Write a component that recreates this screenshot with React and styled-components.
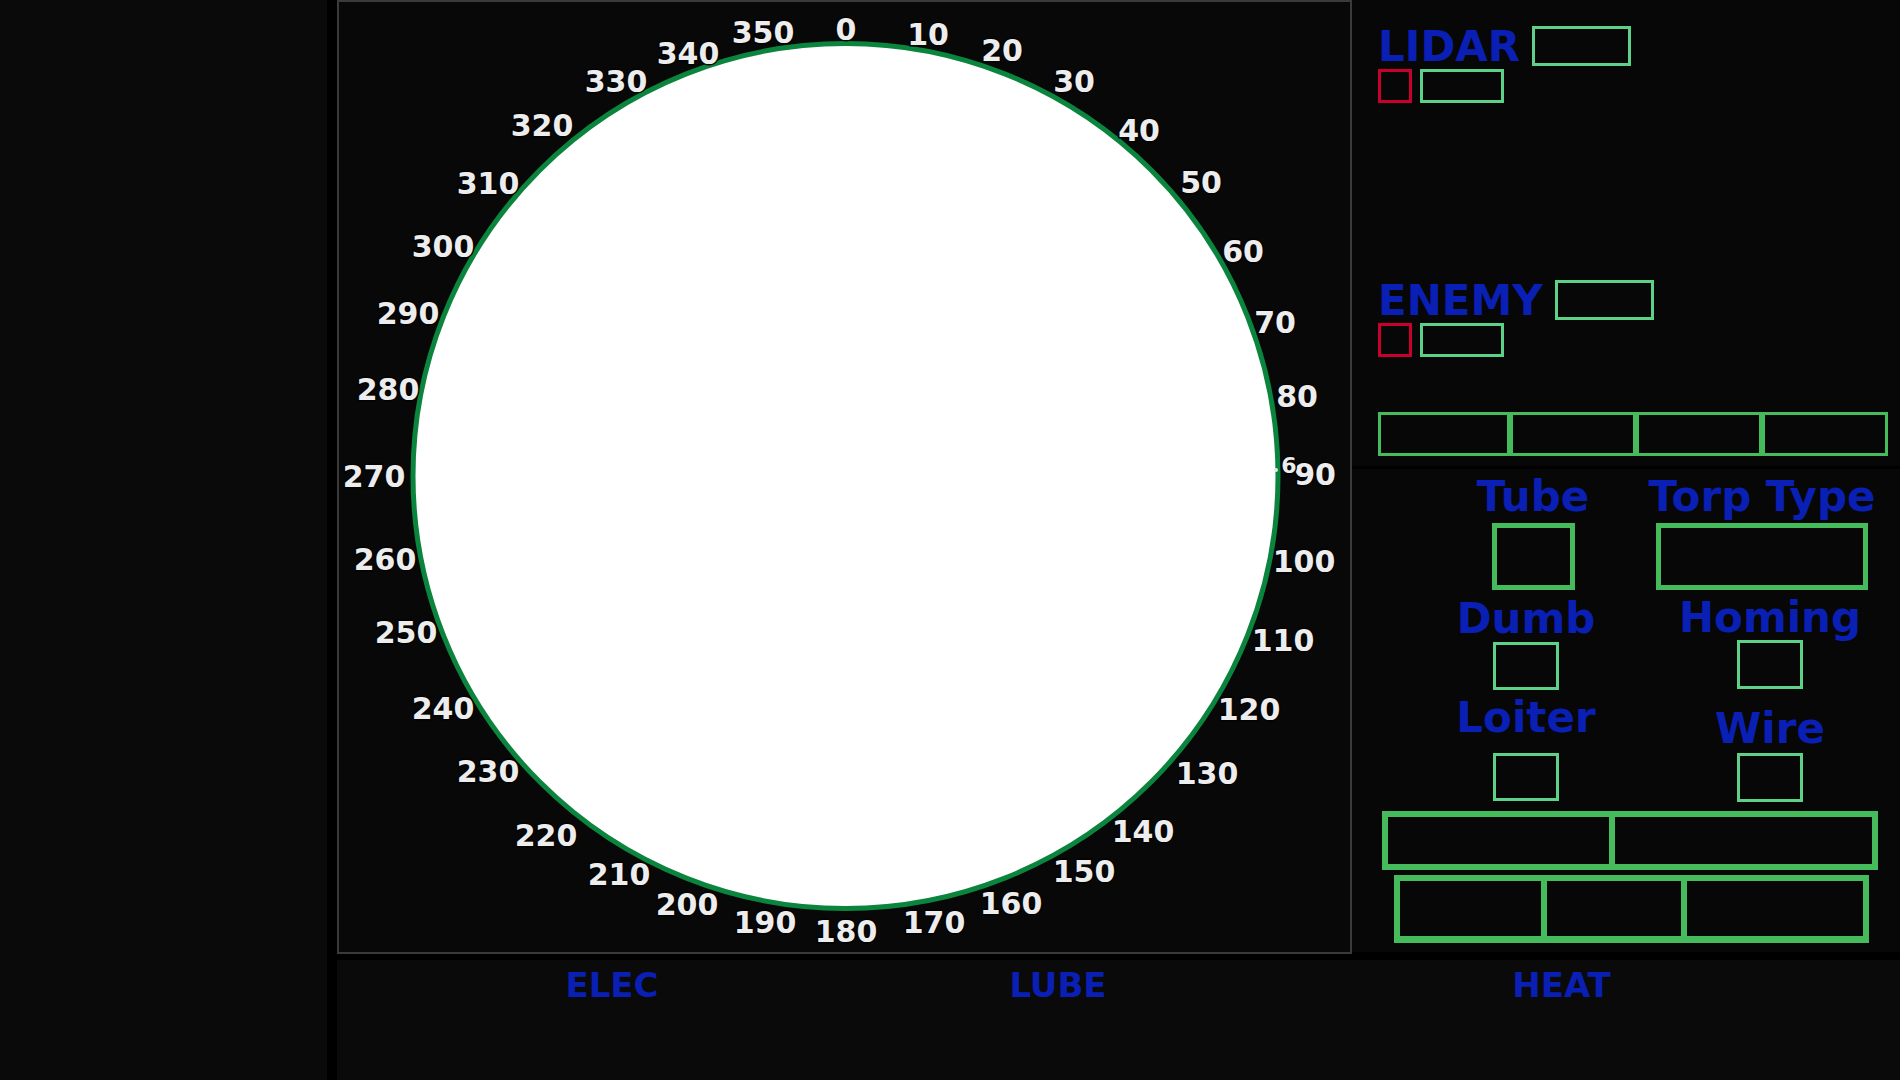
import React from "react";
import styled, { createGlobalStyle } from "styled-components";

const BLUE = "#0a1fb4";
const LIGHT_GREEN = "#5dd187";
const GREEN = "#45bb5b";
const RED = "#c8002d";

const GlobalStyle = createGlobalStyle`
    html, body {
        margin: 0;
        padding: 0;
        background: #000;
    }
    body {
        font-family: "DejaVu Sans", Verdana, sans-serif;
    }
`;

const Screen = styled.div`
    display: flex;
    gap: 10px;
    width: 1900px;
    height: 1080px;
    background: #000;
    overflow: hidden;
`;

const LeftRail = styled.div`
    width: 327px;
    flex-shrink: 0;
    background: #0a0a0a;
`;

const Main = styled.div`
    flex: 1;
    display: flex;
    flex-direction: column;
    gap: 6px;
`;

const TopRow = styled.div`
    display: flex;
    height: 954px;
`;

const CompassPanel = styled.div`
    width: 1015px;
    flex-shrink: 0;
    box-sizing: border-box;
    border: 2px solid #3a3a3a;
    background: #080808;
    svg {
        display: block;
    }
`;

const DialLabel = styled.text`
    font-family: "DejaVu Sans", Verdana, sans-serif;
    font-weight: bold;
    font-size: ${(p) => p.$size || 30}px;
    fill: #ededed;
    stroke: #030303;
    stroke-width: 3px;
    paint-order: stroke;
    text-anchor: middle;
    dominant-baseline: central;
`;

const SideColumn = styled.div`
    flex: 1;
    display: flex;
    flex-direction: column;
    gap: 3px;
    padding-bottom: 2px;
`;

const TargetPanel = styled.div`
    height: 466px;
    flex-shrink: 0;
    box-sizing: border-box;
    background: #070707;
    padding: 26px 0 0 26px;
    display: flex;
    flex-direction: column;
`;

const ContactGroup = styled.div`
    display: flex;
    flex-direction: column;
    gap: 1px;
    margin-top: ${(p) => p.$top || 0}px;
`;

const TitleRow = styled.div`
    display: flex;
    align-items: flex-start;
    gap: 12px;
`;

const Title = styled.div`
    font-size: 42px;
    line-height: 42px;
    font-weight: bold;
    color: ${BLUE};
`;

const StatusRow = styled.div`
    display: flex;
    gap: 8px;
`;

const Box = styled.div`
    box-sizing: border-box;
    width: ${(p) => p.$w}px;
    height: ${(p) => p.$h}px;
    border: ${(p) => p.$bw || 3}px solid ${(p) => p.$color || LIGHT_GREEN};
    background: transparent;
`;

const Bar = styled.div`
    box-sizing: border-box;
    display: grid;
    grid-template-columns: ${(p) => p.$cols};
    width: ${(p) => p.$w}px;
    height: ${(p) => p.$h}px;
    margin: ${(p) => p.$top}px 0 0 ${(p) => p.$left}px;
    border: ${(p) => p.$bw}px solid ${GREEN};
    border-bottom-width: ${(p) => p.$bb || p.$bw}px;
`;

const BarCell = styled.div`
    box-sizing: border-box;
    & + & {
        border-left: ${(p) => p.$div}px solid ${GREEN};
    }
`;

const TorpedoPanel = styled.div`
    flex: 1;
    background: #070707;
    padding-top: 8px;
    display: flex;
    flex-direction: column;
`;

const FieldGrid = styled.div`
    display: grid;
    grid-template-columns: 176px 234px;
    column-gap: 34px;
    row-gap: 8px;
    margin-left: 88px;
`;

const Field = styled.div`
    display: flex;
    flex-direction: column;
    align-items: center;
    padding-top: ${(p) => p.$offset || 0}px;
    padding-left: ${(p) => Math.max(p.$shift || 0, 0) * 2}px;
    padding-right: ${(p) => Math.max(-(p.$shift || 0), 0) * 2}px;
    gap: ${(p) => p.$gap}px;
`;

const FieldLabel = styled.div`
    font-size: 42px;
    line-height: 40px;
    font-weight: bold;
    color: ${BLUE};
    white-space: nowrap;
`;

const BottomPanel = styled.div`
    flex: 1;
    background: #0a0a0a;
    display: grid;
    grid-template-columns: 550px 342px 1fr;
    align-items: start;
    padding: 8px 6px 0 0;
`;

const GaugeLabel = styled.div`
    text-align: center;
    font-size: 34px;
    line-height: 34px;
    font-weight: bold;
    color: ${BLUE};
`;

// bearing, x, y (page coordinates)
const bearings = [
    [0, 846, 29], [10, 928, 34], [20, 1002, 50], [30, 1074, 81],
    [40, 1139, 130], [50, 1201, 182], [60, 1243, 251], [70, 1275, 322],
    [80, 1297, 396], [90, 1315, 474], [100, 1304, 561], [110, 1283, 640],
    [120, 1249, 709], [130, 1207, 773], [140, 1143, 831], [150, 1084, 871],
    [160, 1011, 903], [170, 934, 922], [180, 846, 931], [190, 765, 922],
    [200, 687, 904], [210, 619, 874], [220, 546, 835], [230, 488, 771],
    [240, 443, 708], [250, 406, 632], [260, 385, 559], [270, 374, 476],
    [280, 388, 389], [290, 408, 313], [300, 443, 246], [310, 488, 183],
    [320, 542, 125], [330, 616, 81], [340, 688, 53], [350, 763, 32],
];

function Compass() {
    return (
        <CompassPanel>
            <svg width="1011" height="950" viewBox="339 2 1011 950">
                <circle cx="845.5" cy="476" r="432.5" fill="#fff" stroke="#0b843e" strokeWidth="5" />
                {bearings.map(([deg, x, y]) => (
                    <DialLabel key={deg} x={x} y={y}>
                        {deg}
                    </DialLabel>
                ))}
                <circle cx="1276" cy="470" r="2" fill="#e8e8e8" />
                <DialLabel x={1289} y={465} $size={22}>
                    6
                </DialLabel>
            </svg>
        </CompassPanel>
    );
}

function Contact({ name, top }) {
    return (
        <ContactGroup $top={top}>
            <TitleRow>
                <Title>{name}</Title>
                <Box $w={99} $h={40} />
            </TitleRow>
            <StatusRow>
                <Box $w={34} $h={34} $color={RED} />
                <Box $w={84} $h={34} />
            </StatusRow>
        </ContactGroup>
    );
}

export default function App() {
    return (
        <>
            <GlobalStyle />
            <Screen>
                <LeftRail />
                <Main>
                    <TopRow>
                        <Compass />
                        <SideColumn>
                            <TargetPanel>
                                <Contact name="LIDAR" />
                                <Contact name="ENEMY" top={177} />
                                <Bar $cols="1fr 1fr 1fr 1fr" $w={510} $h={44} $bw={3} $top={55} $left={0}>
                                    <BarCell $div={3} />
                                    <BarCell $div={3} />
                                    <BarCell $div={3} />
                                    <BarCell $div={3} />
                                </Bar>
                            </TargetPanel>
                            <TorpedoPanel>
                                <FieldGrid>
                                    <Field $gap={6} $shift={5}>
                                        <FieldLabel>Tube</FieldLabel>
                                        <Box $w={83} $h={67} $bw={5} $color={GREEN} />
                                    </Field>
                                    <Field $gap={6} $shift={-5}>
                                        <FieldLabel>Torp Type</FieldLabel>
                                        <Box $w={212} $h={67} $bw={5} $color={GREEN} />
                                    </Field>
                                    <Field $gap={3} $offset={1} $shift={-2}>
                                        <FieldLabel>Dumb</FieldLabel>
                                        <Box $w={66} $h={48} />
                                    </Field>
                                    <Field $gap={2} $shift={3}>
                                        <FieldLabel>Homing</FieldLabel>
                                        <Box $w={66} $h={49} />
                                    </Field>
                                    <Field $gap={15} $shift={-2}>
                                        <FieldLabel>Loiter</FieldLabel>
                                        <Box $w={66} $h={48} />
                                    </Field>
                                    <Field $gap={4} $offset={11} $shift={3}>
                                        <FieldLabel>Wire</FieldLabel>
                                        <Box $w={66} $h={49} />
                                    </Field>
                                </FieldGrid>
                                <Bar $cols="221px 1fr" $w={496} $h={59} $bw={6} $top={9} $left={30}>
                                    <BarCell $div={7} />
                                    <BarCell $div={7} />
                                </Bar>
                                <Bar $cols="141px 140px 1fr" $w={475} $h={68} $bw={6} $bb={7} $top={5} $left={42}>
                                    <BarCell $div={6} />
                                    <BarCell $div={6} />
                                    <BarCell $div={6} />
                                </Bar>
                            </TorpedoPanel>
                        </SideColumn>
                    </TopRow>
                    <BottomPanel>
                        <GaugeLabel>ELEC</GaugeLabel>
                        <GaugeLabel>LUBE</GaugeLabel>
                        <GaugeLabel>HEAT</GaugeLabel>
                    </BottomPanel>
                </Main>
            </Screen>
        </>
    );
}
